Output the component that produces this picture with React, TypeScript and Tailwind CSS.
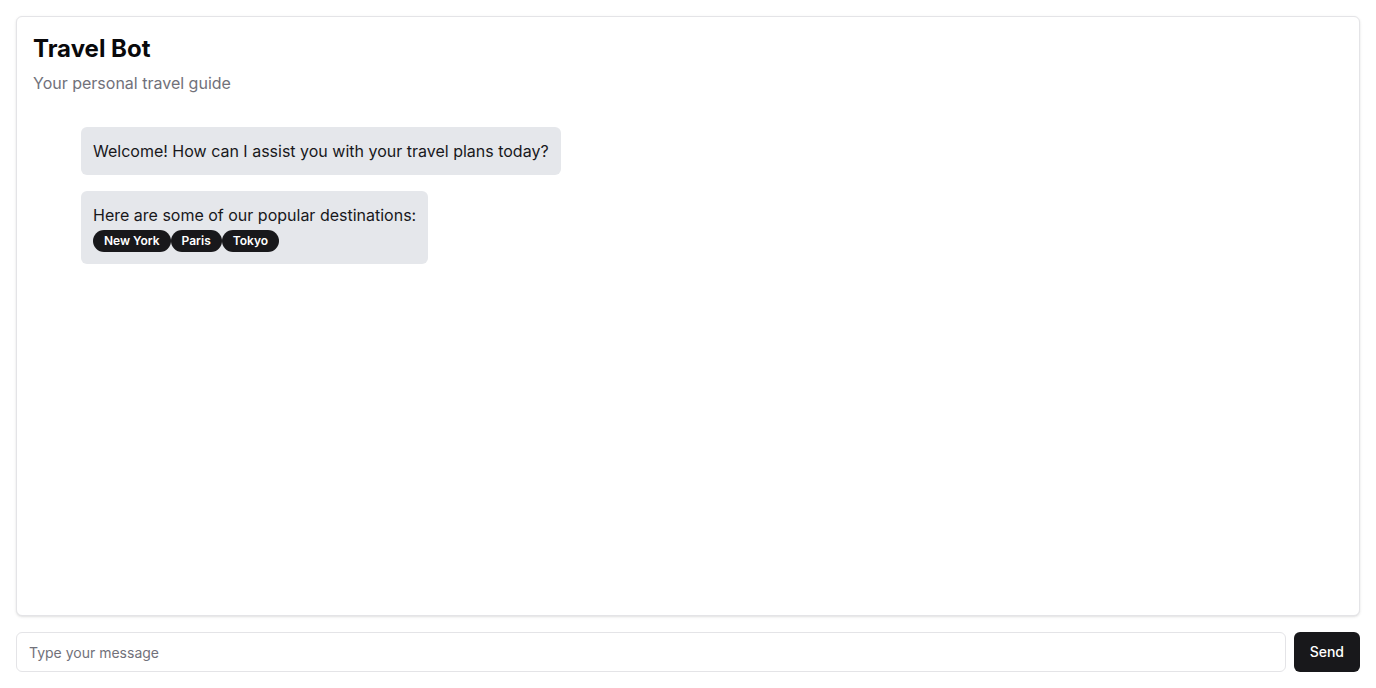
import React from "react";

export default function App() {
  return (
    <div
      className="h-screen flex flex-col p-4 gap-4 bg-white text-[#09090b]"
      style={{ fontFamily: "Inter, 'Noto Sans', sans-serif" }}
    >
      <div className="flex-1 flex flex-col rounded-md border border-[#e4e4e7] bg-white shadow-sm min-h-0">
        <div className="p-4 flex flex-col gap-1.5">
          <h1 className="text-2xl font-bold leading-8">Travel Bot</h1>
          <p className="text-base leading-6 text-[#71717a]">Your personal travel guide</p>
        </div>
        <div className="px-4 pt-4 flex flex-col gap-4 items-start">
          <div className="ml-12 rounded-md bg-[#e5e7eb] p-3 text-base leading-6 text-[#18181b]">
            Welcome! How can I assist you with your travel plans today?
          </div>
          <div className="ml-12 rounded-md bg-[#e5e7eb] p-3 text-base leading-6 text-[#18181b]">
            <div>Here are some of our popular destinations:</div>
            <div className="flex mt-[3px]">
              {["New York", "Paris", "Tokyo"].map((d) => (
                <span
                  key={d}
                  className="inline-flex items-center rounded-full border border-transparent bg-[#18181b] px-2.5 py-0.5 text-xs font-semibold leading-4 text-white"
                >
                  {d}
                </span>
              ))}
            </div>
          </div>
        </div>
      </div>
      <div className="flex gap-2">
        <input
          className="flex-1 h-10 rounded-md border border-[#e4e4e7] bg-white px-3 text-sm text-[#09090b] placeholder:text-[#71717a] outline-none"
          placeholder="Type your message"
        />
        <button className="h-10 px-4 rounded-md bg-[#18181b] text-sm font-medium text-white">
          Send
        </button>
      </div>
    </div>
  );
}
